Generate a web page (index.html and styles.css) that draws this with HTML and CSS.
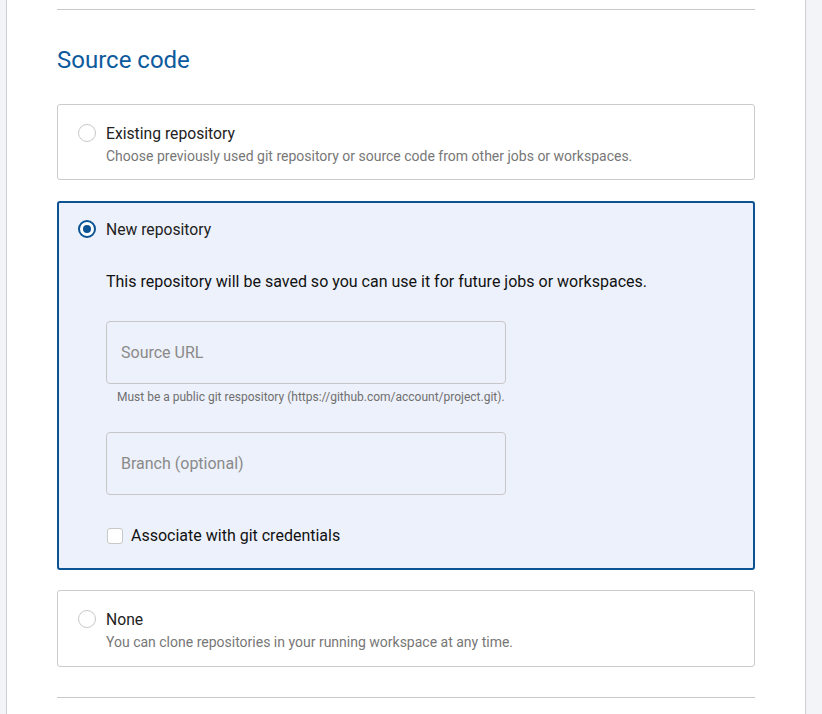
FILE: index.html
```html
<!DOCTYPE html>
<html lang="en">
<head>
<meta charset="utf-8">
<title>Source code</title>
<link rel="stylesheet" href="styles.css">
</head>
<body>
<div class="panel">
  <hr class="divider">
  <h2 class="heading">Source code</h2>
  <div class="options">
    <label class="card">
      <div class="card-head">
        <span class="radio"></span>
        <div class="card-text">
          <div class="card-title">Existing repository</div>
          <div class="card-desc">Choose previously used git repository or source code from other jobs or workspaces.</div>
        </div>
      </div>
    </label>
    <div class="card card-selected">
      <div class="card-head">
        <span class="radio radio-on"></span>
        <div class="card-text">
          <div class="card-title">New repository</div>
        </div>
      </div>
      <div class="card-body">
        <p class="note">This repository will be saved so you can use it for future jobs or workspaces.</p>
        <div class="field">
          <div class="input"><span class="placeholder">Source URL</span></div>
          <div class="help">Must be a public git respository (https://github.com/account/project.git).</div>
        </div>
        <div class="field field-second">
          <div class="input"><span class="placeholder">Branch (optional)</span></div>
        </div>
        <div class="check-row">
          <span class="checkbox"></span>
          <span class="check-label">Associate with git credentials</span>
        </div>
      </div>
    </div>
    <label class="card card-last">
      <div class="card-head">
        <span class="radio"></span>
        <div class="card-text">
          <div class="card-title">None</div>
          <div class="card-desc">You can clone repositories in your running workspace at any time.</div>
        </div>
      </div>
    </label>
  </div>
  <hr class="divider divider-bottom">
</div>
</body>
</html>
```
FILE: styles.css
```css
* { box-sizing: border-box; }
html, body {
  margin: 0;
  padding: 0;
  background: #f3f4f8;
  font-family: Roboto, "Liberation Sans", sans-serif;
}
.panel {
  margin-left: 6px;
  width: 800px;
  min-height: 714px;
  background: #ffffff;
  border-left: 1px solid #cfcfd3;
  border-right: 1px solid #cfcfd3;
  padding: 9px 50px 0 50px;
}
.divider {
  margin: 0;
  border: 0;
  height: 1px;
  background: #c9c9c9;
}
.heading {
  margin: 36px 0 30px 0;
  font-size: 24px;
  line-height: 28px;
  font-weight: 400;
  color: #0d5a9d;
}
.options {
  display: flex;
  flex-direction: column;
  gap: 21px;
}
.card {
  display: block;
  border: 1px solid #cbcbcb;
  border-radius: 3px;
  background: #fff;
  padding: 19px 20px 14px 20px;
}
.card-selected {
  border: 2px solid #0b5394;
  background: #edf1fb;
  padding: 17px 19px 22px 19px;
}
.card-last {
  margin-top: -1px;
  padding-bottom: 15px;
}
.card-head {
  display: flex;
  align-items: flex-start;
  gap: 10px;
}
.radio {
  flex: none;
  width: 18px;
  height: 18px;
  margin-top: 0;
  border-radius: 50%;
  border: 1px solid #c8c8c8;
  background: #fff;
}
.radio-on {
  border: 2px solid #0b5394;
  position: relative;
}
.radio-on::after {
  content: "";
  position: absolute;
  left: 3px;
  top: 3px;
  width: 8px;
  height: 8px;
  border-radius: 50%;
  background: #0b5394;
}
.card-title {
  font-size: 15.7px;
  line-height: 20px;
  color: #222;
}
.card-desc {
  margin-top: 3px;
  font-size: 14px;
  line-height: 18px;
  color: #777;
}
.card-body {
  padding-left: 28px;
}
.note {
  margin: 32px 0 0 0;
  font-size: 16px;
  line-height: 20px;
  color: #111;
}
.field {
  margin-top: 29px;
  width: 400px;
}
.field-second { margin-top: 28px; }
.input {
  height: 63px;
  border: 1px solid #c7c7c7;
  border-radius: 4px;
  display: flex;
  align-items: center;
  padding-left: 14px;
}
.placeholder {
  font-size: 16px;
  color: #8a8a8a;
}
.help {
  margin-top: 6px;
  padding-left: 11px;
  font-size: 12px;
  line-height: 14px;
  color: #6f6f6f;
}
.check-row {
  margin-top: 31px;
  display: flex;
  align-items: center;
  gap: 8px;
  height: 20px;
}
.checkbox {
  flex: none;
  width: 16px;
  height: 16px;
  margin-left: 1px;
  border: 1px solid #c8c8c8;
  border-radius: 3px;
  background: #fff;
}
.check-label {
  font-size: 16px;
  line-height: 20px;
  color: #111;
}
.divider-bottom {
  margin-top: 30px;
}
```
